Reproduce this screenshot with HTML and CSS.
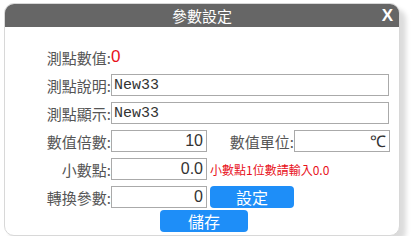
FILE: index.html
```html
<!DOCTYPE html>
<html lang="zh-Hant">

<head>
    <meta charset="UTF-8">
    <meta name="viewport" content="width=device-width, initial-scale=1.0">
    <title>參數設定</title>
    <link rel="stylesheet" href="styles.css">
</head>

<body>
    <div class="dialog">
        <div class="dialog-title">
            參數設定
            <span class="close">X</span>
        </div>
        <div class="form">
            <div class="row">
                <span class="label">測點數值:</span>
                <span class="value">0</span>
            </div>
            <div class="row">
                <span class="label">測點說明:</span>
                <input class="input wide text" type="text" value="New33">
            </div>
            <div class="row">
                <span class="label">測點顯示:</span>
                <input class="input wide text" type="text" value="New33">
            </div>
            <div class="row">
                <span class="label">數值倍數:</span>
                <input class="input num" type="text" value="10">
                <span class="label label-unit">數值單位:</span>
                <input class="input num" type="text" value="℃">
            </div>
            <div class="row">
                <span class="label">小數點:</span>
                <input class="input num" type="text" value="0.0">
                <span class="hint">小數點1位數請輸入0.0</span>
            </div>
            <div class="row">
                <span class="label">轉換參數:</span>
                <input class="input num" type="text" value="0">
                <button class="btn btn-set">設定</button>
            </div>
            <div class="row row-save">
                <button class="btn btn-save">儲存</button>
            </div>
        </div>
    </div>
</body>

</html>
```

FILE: styles.css
```css
body {
    margin: 0;
    background: #fff;
    font-family: "Noto Sans CJK TC", "Liberation Sans", sans-serif;
    color: #555;
}

.dialog {
    width: 394px;
    height: 231px;
    margin: 3px 0 0 4px;
    border: 1px solid #d8d8d8;
    border-radius: 10px;
    background: #fff;
    box-shadow: 6px 6px 5px rgba(0, 0, 0, 0.14);
    overflow: hidden;
}

.dialog-title {
    position: relative;
    height: 23px;
    line-height: 23px;
    background: #666;
    color: #fff;
    text-align: center;
    font-size: 15px;
}

.close {
    position: absolute;
    right: 6px;
    top: 0;
    font-family: "Liberation Sans", sans-serif;
    font-weight: bold;
    font-size: 17px;
}

.form {
    padding: 19px 0 0 40px;
}

.row {
    display: flex;
    align-items: center;
    height: 22px;
    margin-bottom: 6px;
}

.label {
    width: 66px;
    text-align: right;
    font-size: 15px;
    white-space: nowrap;
}

.label-unit {
    width: 87px;
}

.value {
    color: #e8101a;
    font-family: "Liberation Sans", sans-serif;
    font-size: 17px;
}

.input {
    box-sizing: border-box;
    height: 22px;
    width: 96px;
    margin: 0;
    border: 1px solid #aaa;
    color: #333;
    background: #fff;
    outline: none;
}

.input.wide {
    width: 278px;
}

.input.text {
    padding: 0 0 0 2px;
    font-family: "Liberation Mono", monospace;
    font-size: 15px;
}

.input.num {
    padding: 0 3px 0 0;
    text-align: right;
    font-family: "Liberation Sans", sans-serif;
    font-size: 16px;
}

.hint {
    margin-left: 3px;
    color: #e8101a;
    font-size: 12px;
}

.btn {
    height: 22px;
    border: none;
    border-radius: 4px;
    background: #1e8ef8;
    color: #fff;
    font-family: "Noto Sans CJK TC", sans-serif;
    font-size: 16px;
    line-height: 22px;
    padding: 0;
}

.btn-set {
    width: 84px;
    margin-left: 3px;
}

.row-save {
    margin-top: -4px;
}

.btn-save {
    width: 88px;
    margin-left: 115px;
}
```
